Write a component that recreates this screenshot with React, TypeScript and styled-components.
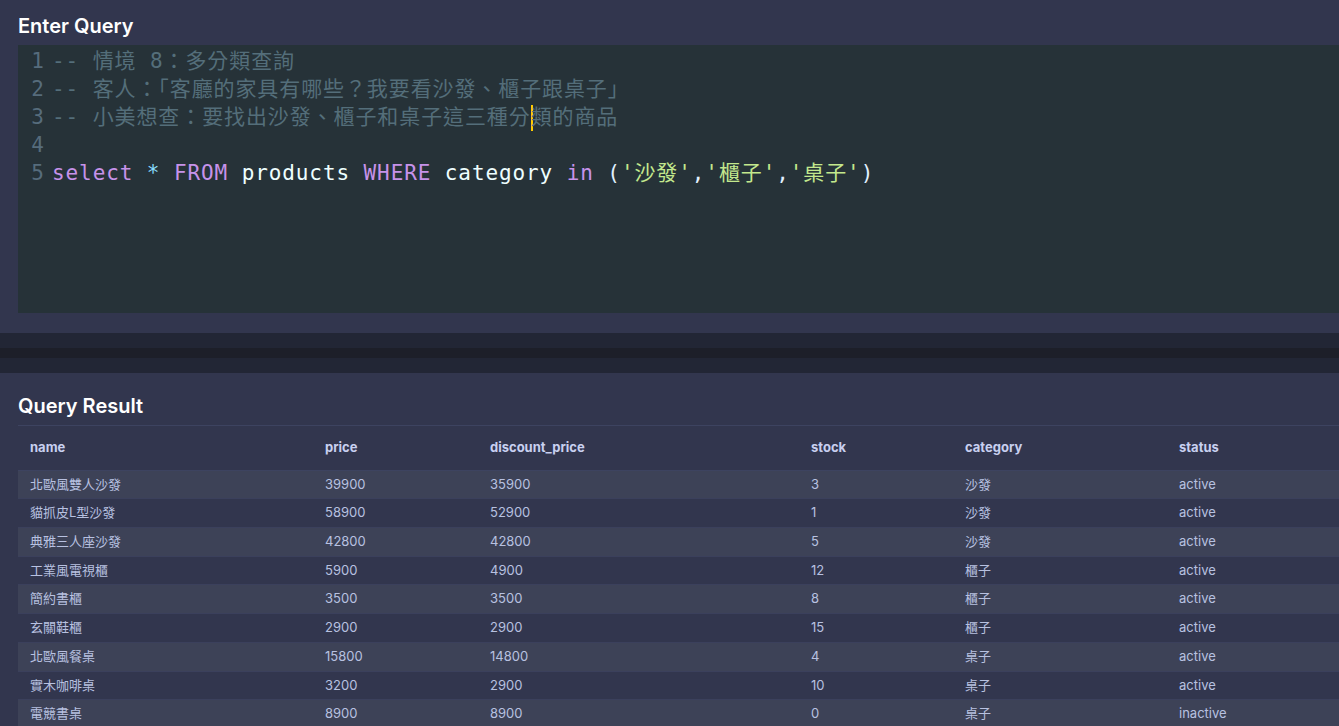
import React from "react";
import styled, { createGlobalStyle } from "styled-components";

const GlobalStyle = createGlobalStyle`
  html, body {
    margin: 0;
    padding: 0;
    background: #32364e;
    overflow: hidden;
  }
  * { box-sizing: border-box; }
`;

const Page = styled.div`
  display: flex;
  flex-direction: column;
  width: 1339px;
  font-family: Inter, "Noto Sans", "Noto Sans CJK TC", sans-serif;
`;

const Panel = styled.section<{ $top: number; $bottom: number }>`
  background: #32364e;
  padding: ${(p) => p.$top}px 0 ${(p) => p.$bottom}px 18px;
`;

const PanelTitle = styled.h2`
  margin: 0 0 7px;
  font-family: Inter, "Noto Sans", sans-serif;
  font-size: 20px;
  font-weight: 600;
  line-height: 24px;
  color: #ffffff;
  letter-spacing: 0;
`;

const Editor = styled.div`
  display: flex;
  height: 268px;
  background: #263238;
  padding-top: 2px;
  font-family: "DejaVu Sans Mono", "Noto Sans CJK TC", monospace;
  font-size: 21px;
  letter-spacing: 0.9px;
`;

const Gutter = styled.div`
  width: 30px;
  padding-right: 4px;
  text-align: right;
  color: #566c7c;
`;

const GutterNum = styled.div`
  height: 28px;
  line-height: 28px;
  letter-spacing: 0;
`;

const Code = styled.div`
  flex: 1;
  padding-left: 4px;
`;

const CodeLine = styled.div`
  height: 28px;
  line-height: 28px;
  white-space: pre;
  color: #eeffff;
`;

type Kind = "comment" | "keyword" | "op" | "ident" | "string" | "punct";

const tokenColors: Record<Kind, string> = {
  comment: "#546e7a",
  keyword: "#c792ea",
  op: "#89ddff",
  ident: "#eeffff",
  string: "#c3e88d",
  punct: "#e0f0ff",
};

const Token = styled.span<{ $kind: Kind }>`
  color: ${(p) => tokenColors[p.$kind]};
  line-height: 1;
`;

const CommentCjk = styled.span`
  font-family: "Noto Sans CJK TC", sans-serif;
  line-height: 1;
`;

const Cursor = styled.span`
  display: inline-block;
  width: 0;
  height: 26px;
  margin-right: -2px;
  border-left: 2px solid #ffcc00;
  vertical-align: middle;
`;

const Splitter = styled.div`
  height: 40px;
  background: #1d1f29;
  border-top: 15px solid #222635;
  border-bottom: 15px solid #222635;
`;

const Table = styled.table`
  width: 1321px;
  border-collapse: collapse;
  table-layout: fixed;
  font-family: Inter, "Noto Sans", "Noto Sans CJK TC", sans-serif;
  font-size: 13px;
`;

const HeadCell = styled.th`
  text-align: left;
  padding: 14px 12px;
  line-height: 15.6px;
  font-weight: 700;
  color: #c8d0f0;
  border-top: 1px solid #3d4360;
  border-bottom: 1px solid #3d4360;
`;

const Row = styled.tr<{ $striped: boolean }>`
  background: ${(p) => (p.$striped ? "#3d4257" : "#32364e")};
  border-bottom: 1px solid #3b405c;
`;

const Cell = styled.td`
  padding: 6px 12px;
  line-height: 15.7px;
  color: #b8c1e0;
  white-space: nowrap;
`;

const columns = [
  { key: "name", width: 295 },
  { key: "price", width: 165 },
  { key: "discount_price", width: 321 },
  { key: "stock", width: 154 },
  { key: "category", width: 214 },
  { key: "status", width: 172 },
];

const rows: string[][] = [
  ["北歐風雙人沙發", "39900", "35900", "3", "沙發", "active"],
  ["貓抓皮L型沙發", "58900", "52900", "1", "沙發", "active"],
  ["典雅三人座沙發", "42800", "42800", "5", "沙發", "active"],
  ["工業風電視櫃", "5900", "4900", "12", "櫃子", "active"],
  ["簡約書櫃", "3500", "3500", "8", "櫃子", "active"],
  ["玄關鞋櫃", "2900", "2900", "15", "櫃子", "active"],
  ["北歐風餐桌", "15800", "14800", "4", "桌子", "active"],
  ["實木咖啡桌", "3200", "2900", "10", "桌子", "active"],
  ["電競書桌", "8900", "8900", "0", "桌子", "inactive"],
];

export default function App() {
  return (
    <>
      <GlobalStyle />
      <Page>
        <Panel $top={14} $bottom={20}>
          <PanelTitle>Enter Query</PanelTitle>
          <Editor>
            <Gutter>
              {[1, 2, 3, 4, 5].map((n) => (
                <GutterNum key={n}>{n}</GutterNum>
              ))}
            </Gutter>
            <Code>
              <CodeLine>
                <Token $kind="comment">
                  -- <CommentCjk>情境</CommentCjk> 8<CommentCjk>：多分類查詢</CommentCjk>
                </Token>
              </CodeLine>
              <CodeLine>
                <Token $kind="comment">
                  -- <CommentCjk>客人：「客廳的家具有哪些？我要看沙發、櫃子跟桌子」</CommentCjk>
                </Token>
              </CodeLine>
              <CodeLine>
                <Token $kind="comment">
                  -- <CommentCjk>小美想查：要找出沙發、櫃子和桌子這三種分</CommentCjk>
                  <Cursor />
                  <CommentCjk>類的商品</CommentCjk>
                </Token>
              </CodeLine>
              <CodeLine> </CodeLine>
              <CodeLine>
                <Token $kind="keyword">select</Token> <Token $kind="op">*</Token>{" "}
                <Token $kind="keyword">FROM</Token> <Token $kind="ident">products</Token>{" "}
                <Token $kind="keyword">WHERE</Token> <Token $kind="ident">category</Token>{" "}
                <Token $kind="keyword">in</Token> <Token $kind="punct">(</Token>
                <Token $kind="string">'沙發'</Token>
                <Token $kind="punct">,</Token>
                <Token $kind="string">'櫃子'</Token>
                <Token $kind="punct">,</Token>
                <Token $kind="string">'桌子'</Token>
                <Token $kind="punct">)</Token>
              </CodeLine>
            </Code>
          </Editor>
        </Panel>
        <Splitter />
        <Panel $top={21} $bottom={0}>
          <PanelTitle>Query Result</PanelTitle>
          <Table>
            <colgroup>
              {columns.map((c) => (
                <col key={c.key} style={{ width: c.width }} />
              ))}
            </colgroup>
            <thead>
              <tr>
                {columns.map((c) => (
                  <HeadCell key={c.key}>{c.key}</HeadCell>
                ))}
              </tr>
            </thead>
            <tbody>
              {rows.map((r, i) => (
                <Row key={i} $striped={i % 2 === 0}>
                  {r.map((v, j) => (
                    <Cell key={j}>{v}</Cell>
                  ))}
                </Row>
              ))}
            </tbody>
          </Table>
        </Panel>
      </Page>
    </>
  );
}
